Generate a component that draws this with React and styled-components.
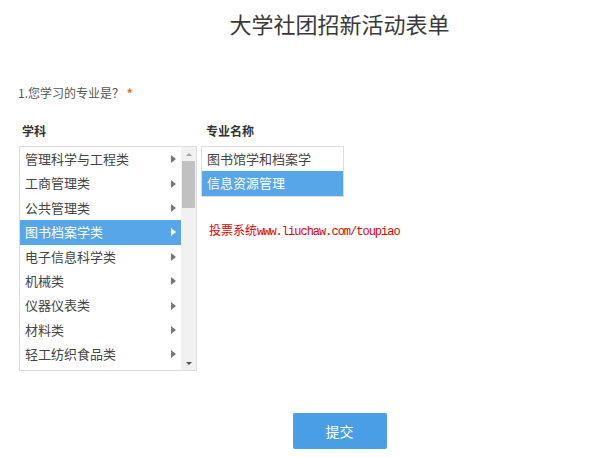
import styled, { createGlobalStyle } from 'styled-components';

const GlobalStyle = createGlobalStyle`
	body {
		margin: 0;
		background: #fff;
		font-family: 'Noto Sans CJK SC', 'Noto Sans', sans-serif;
		color: #333;
	}
`;

const subjects = [
	'管理科学与工程类',
	'工商管理类',
	'公共管理类',
	'图书档案学类',
	'电子信息科学类',
	'机械类',
	'仪器仪表类',
	'材料类',
	'轻工纺织食品类',
];

const majors = ['图书馆学和档案学', '信息资源管理'];

const App = () => {
	return (
		<Page>
			<GlobalStyle />
			<Title>大学社团招新活动表单</Title>
			<Question>
				1.您学习的专业是？ <Star>*</Star>
			</Question>
			<Columns>
				<Column>
					<Label $indent={3}>学科</Label>
					<ListBox $width={178} $height={225}>
						<Items>
							{subjects.map((s, i) => (
								<Item key={s} $active={i === 3}>
									{s}
									<Caret $active={i === 3} />
								</Item>
							))}
						</Items>
						<ScrollBar>
							<ScrollButton>
								<TinyArrow $up />
							</ScrollButton>
							<Thumb />
							<Track />
							<ScrollButton>
								<TinyArrow />
							</ScrollButton>
						</ScrollBar>
					</ListBox>
				</Column>
				<Column>
					<Label $indent={5}>专业名称</Label>
					<ListBox $width={143}>
						<Items>
							{majors.map((m, i) => (
								<Item key={m} $active={i === 1}>
									{m}
								</Item>
							))}
						</Items>
					</ListBox>
					<Promo>
						投票系统<Latin>www.liuchaw.com/toupiao</Latin>
					</Promo>
				</Column>
			</Columns>
			<Footer>
				<Submit>提交</Submit>
			</Footer>
		</Page>
	);
};

const Page = styled.div`
	width: 604px;
	padding: 10px 0 0 19px;
	box-sizing: border-box;
`;

const Title = styled.h1`
	margin: 0;
	padding-left: 56px;
	text-align: center;
	font-size: 22px;
	font-weight: 400;
	line-height: 26px;
	color: #3a3a3a;
`;

const Question = styled.div`
	margin-top: 48px;
	margin-left: -1px;
	font-size: 12px;
	line-height: 18px;
	color: #555;
`;

const Star = styled.span`
	color: #e8662c;
	font-weight: bold;
`;

const Columns = styled.div`
	display: flex;
	gap: 4px;
	margin-top: 20px;
	align-items: flex-start;
`;

const Column = styled.div`
	display: flex;
	flex-direction: column;
`;

const Label = styled.div`
	font-size: 12px;
	font-weight: bold;
	line-height: 18px;
	padding-left: ${(p) => p.$indent}px;
	margin-bottom: 6px;
	color: #333;
`;

const ListBox = styled.div`
	display: flex;
	width: ${(p) => p.$width}px;
	height: ${(p) => (p.$height ? `${p.$height}px` : 'auto')};
	border: 1px solid #dcdcdc;
	box-sizing: border-box;
	background: #fff;
	overflow: hidden;
`;

const Items = styled.div`
	flex: 1;
	display: flex;
	flex-direction: column;
`;

const Item = styled.div`
	position: relative;
	height: 24.4px;
	line-height: 24.4px;
	padding-left: 5px;
	font-size: 13px;
	white-space: nowrap;
	color: ${(p) => (p.$active ? '#fff' : '#444')};
	background: ${(p) => (p.$active ? '#56a6e8' : 'transparent')};
`;

const Caret = styled.span`
	position: absolute;
	right: 5px;
	top: 50%;
	margin-top: -4px;
	width: 0;
	height: 0;
	border-top: 4px solid transparent;
	border-bottom: 4px solid transparent;
	border-left: 5px solid ${(p) => (p.$active ? '#fff' : '#777')};
`;

const ScrollBar = styled.div`
	width: 15px;
	display: flex;
	flex-direction: column;
	background: #f1f1f1;
`;

const ScrollButton = styled.div`
	height: 14px;
	display: flex;
	align-items: center;
	justify-content: center;
`;

const TinyArrow = styled.span`
	width: 0;
	height: 0;
	border-left: 3px solid transparent;
	border-right: 3px solid transparent;
	${(p) => (p.$up ? 'border-bottom: 3px solid #a3a3a3;' : 'border-top: 3px solid #505050;')}
`;

const Thumb = styled.div`
	height: 47px;
	margin: 0 1px;
	background: #c1c1c1;
`;

const Track = styled.div`
	flex: 1;
`;

const Promo = styled.div`
	margin-top: 25px;
	padding-left: 8px;
	font-size: 12px;
	line-height: 16px;
	color: #e00000;
	font-family: 'Noto Sans CJK SC', sans-serif;
`;

const Latin = styled.span`
	font-family: 'Liberation Mono', monospace;
	letter-spacing: -1px;
`;

const Footer = styled.div`
	display: flex;
	justify-content: center;
	padding-left: 56px;
	margin-top: 42px;
`;

const Submit = styled.button`
	width: 94px;
	height: 36px;
	border: 0;
	border-radius: 2px;
	background: #4a9ee5;
	color: #fff;
	font-family: 'Noto Sans CJK SC', sans-serif;
	font-size: 14px;
	cursor: pointer;
`;

export default App;
